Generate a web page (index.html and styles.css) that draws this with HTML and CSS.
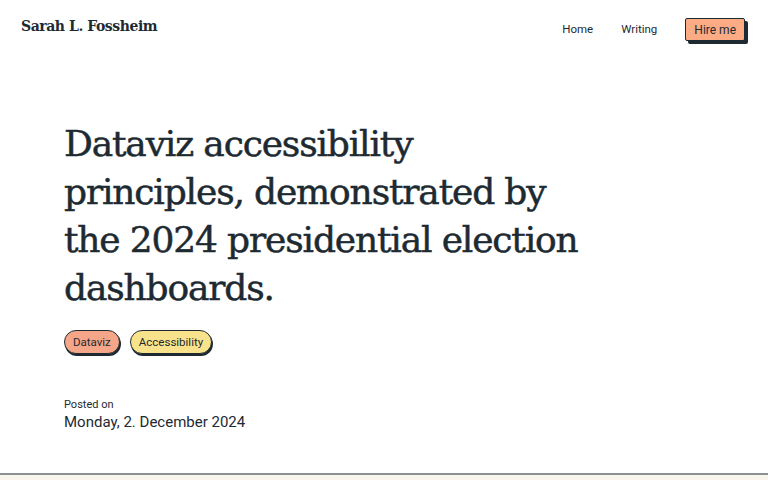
FILE: index.html
```html
<!DOCTYPE html>
<html lang="en">
<head>
  <meta charset="UTF-8">
  <meta name="viewport" content="width=device-width, initial-scale=1.0">
  <title>Dataviz accessibility principles - Sarah L. Fossheim</title>
  <link rel="stylesheet" href="styles.css">
</head>
<body>
  <header class="site-header">
    <a class="logo" href="#">Sarah L. Fossheim</a>
    <nav class="nav">
      <a class="nav-link" href="#">Home</a>
      <a class="nav-link" href="#">Writing</a>
      <a class="nav-btn" href="#">Hire me</a>
    </nav>
  </header>

  <main class="article-head">
    <h1 class="title">Dataviz accessibility principles, demonstrated by the 2024 presidential election dashboards.</h1>

    <ul class="tags">
      <li class="tag tag-dataviz">Dataviz</li>
      <li class="tag tag-a11y">Accessibility</li>
    </ul>

    <div class="posted">
      <div class="posted-label">Posted on</div>
      <time class="posted-date">Monday, 2. December 2024</time>
    </div>
  </main>

  <div class="content-start"></div>
</body>
</html>
```

FILE: styles.css
```css
* {
  margin: 0;
  padding: 0;
  box-sizing: border-box;
}

body {
  width: 768px;
  min-height: 480px;
  font-family: Roboto, 'Liberation Sans', sans-serif;
  color: #1e2a31;
  background: #fff;
  overflow: hidden;
}

a {
  color: inherit;
  text-decoration: none;
}

.site-header {
  display: flex;
  align-items: center;
  justify-content: space-between;
  height: 58px;
  padding: 0 23px 0 21px;
}

.logo {
  font-family: 'DejaVu Serif', 'Liberation Serif', serif;
  font-weight: 700;
  font-size: 14px;
  letter-spacing: -0.45px;
  margin-top: -6px;
}

.nav {
  display: flex;
  align-items: center;
}

.nav-link {
  font-size: 11.5px;
  margin-right: 28px;
}

.nav-btn {
  font-size: 12px;
  line-height: 14px;
  background: #fcab85;
  border: 1px solid #1e2a31;
  border-radius: 2px;
  padding: 4px 8px 3px;
  box-shadow: 3px 3px 0 #1e2a31;
}

.article-head {
  padding: 62px 64px 0;
}

.title {
  font-family: 'DejaVu Serif', 'Liberation Serif', serif;
  font-weight: 400;
  font-size: 36px;
  line-height: 48px;
  letter-spacing: -1.15px;
  -webkit-text-stroke: 0.5px #1e2a31;
  max-width: 530px;
}

.tags {
  list-style: none;
  display: flex;
  gap: 10px;
  margin-top: 18px;
}

.tag {
  font-size: 11.5px;
  padding: 4px 8px;
  border: 1px solid #1e2a31;
  border-radius: 12px;
  box-shadow: 1px 2px 0 #1e2a31;
}

.tag-dataviz {
  background: #f6a688;
}

.tag-a11y {
  background: #f8e38c;
}

.posted {
  margin-top: 44px;
}

.posted-label {
  font-size: 11px;
  line-height: 14px;
}

.posted-date {
  display: block;
  font-size: 15px;
  line-height: 18px;
  margin-top: 1px;
}

.content-start {
  margin-top: 42px;
  height: 60px;
  border-top: 2px solid #8b9094;
  background: #faf5ec;
}
```
